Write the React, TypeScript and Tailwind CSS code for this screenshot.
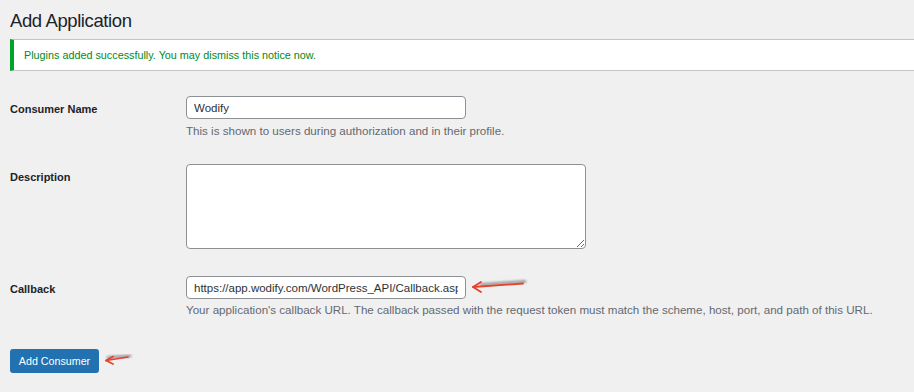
import React from "react";

const font = { fontFamily: '"Liberation Sans", Arial, sans-serif' };

function Arrow({ className }: { className: string }) {
  return (
    <svg className={className} viewBox="0 0 60 16" width="60" height="16" fill="none">
      <defs>
        <filter id="blur" x="-20%" y="-100%" width="140%" height="300%">
          <feGaussianBlur stdDeviation="1.2" />
        </filter>
      </defs>
      <path d="M10 6.5 L54 3.5" stroke="#8a8a8a" strokeWidth="3" strokeLinecap="round" filter="url(#blur)" opacity="0.8" />
      <path d="M2 9 L52 5.5" stroke="#e5412b" strokeWidth="1.8" strokeLinecap="round" />
      <path d="M10 4 L2 9 L10 14" stroke="#e5412b" strokeWidth="1.8" strokeLinecap="round" strokeLinejoin="round" />
    </svg>
  );
}

function SmallArrow({ className }: { className: string }) {
  return (
    <svg className={className} viewBox="0 0 30 14" width="30" height="14" fill="none">
      <defs>
        <filter id="blur2" x="-30%" y="-100%" width="160%" height="300%">
          <feGaussianBlur stdDeviation="1.2" />
        </filter>
      </defs>
      <path d="M4 4.5 L26 3" stroke="#8a8a8a" strokeWidth="3" strokeLinecap="round" filter="url(#blur2)" opacity="0.8" />
      <path d="M2 7.5 L24 4" stroke="#e5412b" strokeWidth="1.7" strokeLinecap="round" />
      <path d="M9 3.5 L2 7.5 L9 11" stroke="#e5412b" strokeWidth="1.7" strokeLinecap="round" strokeLinejoin="round" />
    </svg>
  );
}

export default function App() {
  return (
    <div className="min-h-screen w-full bg-[#f0f0f1] pl-[10px] pt-[9px] pb-[19px] text-[#1d2327]" style={font}>
      <h1 className="text-[18.5px] leading-[24px] tracking-[-0.4px] font-normal text-[#1d2327]">Add Application</h1>

      <div className="mt-[6px] flex h-[32px] items-center border-y border-[#c3c4c7] border-l-4 border-l-[#00a32a] bg-white pl-[10px]">
        <p className="text-[10.8px] leading-[14px] text-[#008a20]">Plugins added successfully. You may dismiss this notice now.</p>
      </div>

      {/* Consumer Name */}
      <div className="mt-[25px] flex">
        <div className="w-[176px] shrink-0 h-[23px] pt-[3px] flex items-center text-[11px] font-bold">Consumer Name</div>
        <div>
          <input
            readOnly
            value="Wodify"
            className="block h-[23px] w-[280px] rounded-[4px] border border-[#8c8f94] bg-white px-[7px] text-[11.5px] text-[#2c3338] outline-none"
            style={font}
          />
          <p className="mt-[4px] text-[11.6px] leading-[16px] text-[#646970]">This is shown to users during authorization and in their profile.</p>
        </div>
      </div>

      {/* Description */}
      <div className="mt-[25px] flex">
        <div className="w-[176px] shrink-0 h-[23px] pt-[3px] flex items-center text-[11px] font-bold">Description</div>
        <div>
          <textarea
            readOnly
            className="block h-[85px] w-[400px] rounded-[4px] border border-[#8c8f94] bg-white outline-none"
          />
        </div>
      </div>

      {/* Callback */}
      <div className="mt-[27px] flex">
        <div className="w-[176px] shrink-0 h-[23px] pt-[3px] flex items-center text-[11px] font-bold">Callback</div>
        <div>
          <div className="relative w-[280px]">
            <input
              readOnly
              value="https://app.wodify.com/WordPress_API/Callback.aspx"
              className="block h-[23px] w-[280px] rounded-[4px] border border-[#8c8f94] bg-white px-[7px] text-[11.5px] text-[#2c3338] outline-none"
              style={font}
            />
            <Arrow className="absolute left-[285px] top-[2px]" />
          </div>
          <p className="mt-[3px] text-[11.6px] leading-[16px] text-[#646970]">
            Your application's callback URL. The callback passed with the request token must match the scheme, host, port, and path of this URL.
          </p>
        </div>
      </div>

      <div className="relative mt-[30px] inline-block">
        <button className="h-[24px] w-[89px] rounded-[3px] bg-[#2271b1] text-[10.7px] text-white" style={font}>
          Add Consumer
        </button>
        <SmallArrow className="absolute left-[94px] top-[5px]" />
      </div>
    </div>
  );
}
